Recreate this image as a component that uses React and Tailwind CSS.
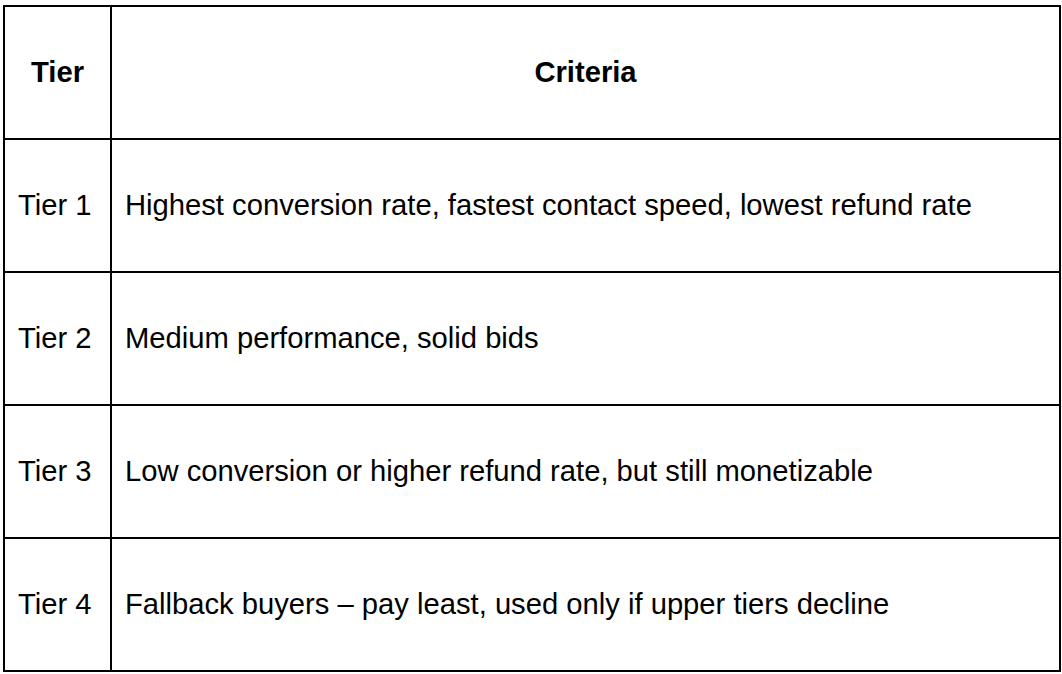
const rows = [
  { tier: "Tier 1", criteria: "Highest conversion rate, fastest contact speed, lowest refund rate" },
  { tier: "Tier 2", criteria: "Medium performance, solid bids" },
  { tier: "Tier 3", criteria: "Low conversion or higher refund rate, but still monetizable" },
  { tier: "Tier 4", criteria: "Fallback buyers – pay least, used only if upper tiers decline" },
];

export default function App() {
  return (
    <div className="min-h-screen bg-white pl-[3px] pt-[5px] font-['Liberation_Sans',Arial,sans-serif] text-black">
      <table className="w-[1058px] border-collapse table-fixed">
        <colgroup>
          <col className="w-[107px]" />
          <col />
        </colgroup>
        <thead>
          <tr className="h-[133px]">
            <th className="border-2 border-black px-[14px] text-center text-[29.2px] font-bold">Tier</th>
            <th className="border-2 border-black px-[14px] text-center text-[29.2px] font-bold">Criteria</th>
          </tr>
        </thead>
        <tbody>
          {rows.map((r) => (
            <tr key={r.tier} className="h-[133px]">
              <td className="border-2 border-black pl-[13px] pr-[10px] text-left text-[29.2px] whitespace-nowrap">{r.tier}</td>
              <td className="border-2 border-black pl-[13px] pr-[14px] text-left text-[29.2px] whitespace-nowrap">{r.criteria}</td>
            </tr>
          ))}
        </tbody>
      </table>
    </div>
  );
}
